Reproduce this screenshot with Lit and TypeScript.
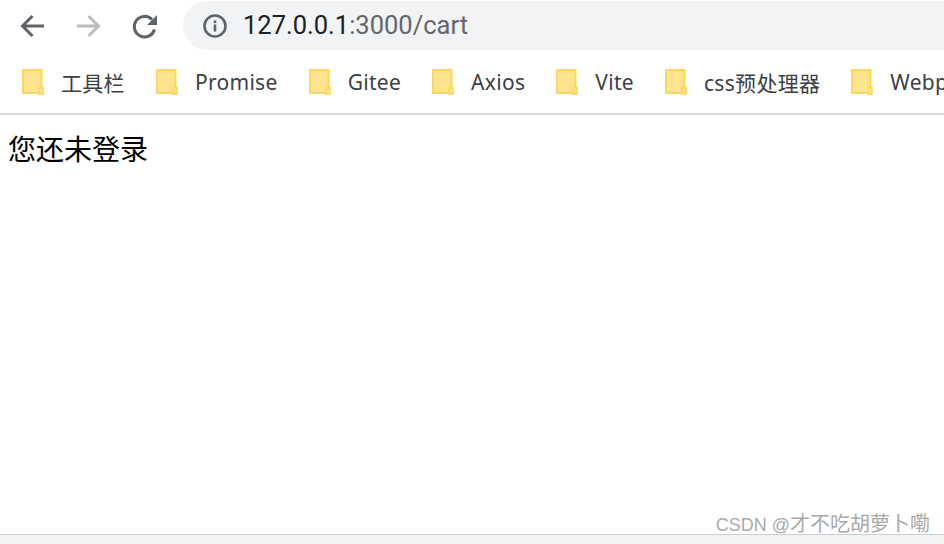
import { LitElement, html, css } from 'lit';
import { customElement } from 'lit/decorators.js';

const bookmarks = ['工具栏', 'Promise', 'Gitee', 'Axios', 'Vite', 'css预处理器', 'Webpack'];

const folder = html`
  <svg class="folder" width="22" height="26" viewBox="0 0 22 26">
    <rect x="1" y="1" width="18.5" height="23" fill="#fee48f" stroke="#fdd65e" stroke-width="2"/>
    <rect x="17" y="18.5" width="4" height="6.5" fill="#fee48f" stroke="#fdd65e" stroke-width="1.6"/>
  </svg>
`;

@customElement('app-root')
export class AppRoot extends LitElement {
  static styles = css`
    :host {
      display: flex;
      flex-direction: column;
      position: relative;
      width: 944px;
      height: 544px;
      overflow: hidden;
      background: #fff;
    }

    .toolbar {
      display: flex;
      align-items: center;
      height: 50px;
      padding: 1px 0 0 18px;
      box-sizing: border-box;
      flex: none;
    }

    .nav {
      display: flex;
      align-items: center;
      gap: 26px;
      margin-right: 23px;
    }

    .nav svg {
      display: block;
    }

    .address {
      flex: 1;
      display: flex;
      align-items: center;
      height: 49px;
      padding-left: 19px;
      background: #f1f3f4;
      border-radius: 25px 0 0 25px;
    }

    .url {
      margin-left: 15px;
      font: 25.5px/49px Roboto, "Liberation Sans", sans-serif;
      color: #63666a;
      white-space: nowrap;
    }

    .url b {
      font-weight: 400;
      color: #202124;
    }

    .bookmarks {
      display: flex;
      align-items: center;
      height: 63px;
      padding-left: 22px;
      gap: 31px;
      border-bottom: 2px solid #dadada;
      flex: none;
      overflow: hidden;
    }

    .bookmark {
      display: flex;
      align-items: center;
      gap: 17px;
      flex: none;
      font: 21px "Noto Sans", "Noto Sans CJK SC", sans-serif;
      letter-spacing: 0.3px;
      color: #3c4043;
    }

    .folder {
      display: block;
      flex: none;
    }

    .page {
      flex: 1;
      padding: 15px 8px;
      font: 28px/36px "Noto Sans CJK SC", sans-serif;
      color: #000;
    }

    .scrollbar {
      height: 9px;
      flex: none;
      background: #f1f3f4;
      border-top: 1px solid #c9ccd2;
    }

    .watermark {
      position: absolute;
      right: 14px;
      bottom: 7px;
      font: 20px "Noto Sans CJK SC", sans-serif;
      color: #a9a9a9;
    }

    .watermark span {
      font: 18px "Liberation Sans", sans-serif;
    }
  `;

  render() {
    return html`
      <div class="toolbar">
        <div class="nav">
          <svg width="30" height="30" viewBox="0 0 30 30" fill="none" stroke="#5f6368" stroke-width="3">
            <path d="M26 15H5M14.5 5L4.5 15 14.5 25"/>
          </svg>
          <svg width="30" height="30" viewBox="0 0 30 30" fill="none" stroke="#babcbe" stroke-width="3">
            <path d="M3 15h21M14.5 5l10 10-10 10"/>
          </svg>
          <svg width="30" height="30" viewBox="0 0 30 30" fill="none">
            <path d="M22 8.5A10.3 10.3 0 1 0 24.5 18.5" stroke="#5f6368" stroke-width="3"/>
            <path d="M27 4v10H17z" fill="#5f6368"/>
          </svg>
        </div>
        <div class="address">
          <svg width="26" height="26" viewBox="0 0 26 26" fill="none">
            <circle cx="13" cy="13" r="10.5" stroke="#5f6368" stroke-width="2.6"/>
            <rect x="11.7" y="11.5" width="2.6" height="7" fill="#5f6368"/>
            <rect x="11.7" y="7.5" width="2.6" height="2.6" fill="#5f6368"/>
          </svg>
          <span class="url"><b>127.0.0.1</b>:3000/cart</span>
        </div>
      </div>
      <div class="bookmarks">
        ${bookmarks.map((name) => html`<div class="bookmark">${folder}<span>${name}</span></div>`)}
      </div>
      <div class="page">您还未登录</div>
      <div class="scrollbar"></div>
      <div class="watermark"><span>CSDN @</span>才不吃胡萝卜嘞</div>
    `;
  }
}
